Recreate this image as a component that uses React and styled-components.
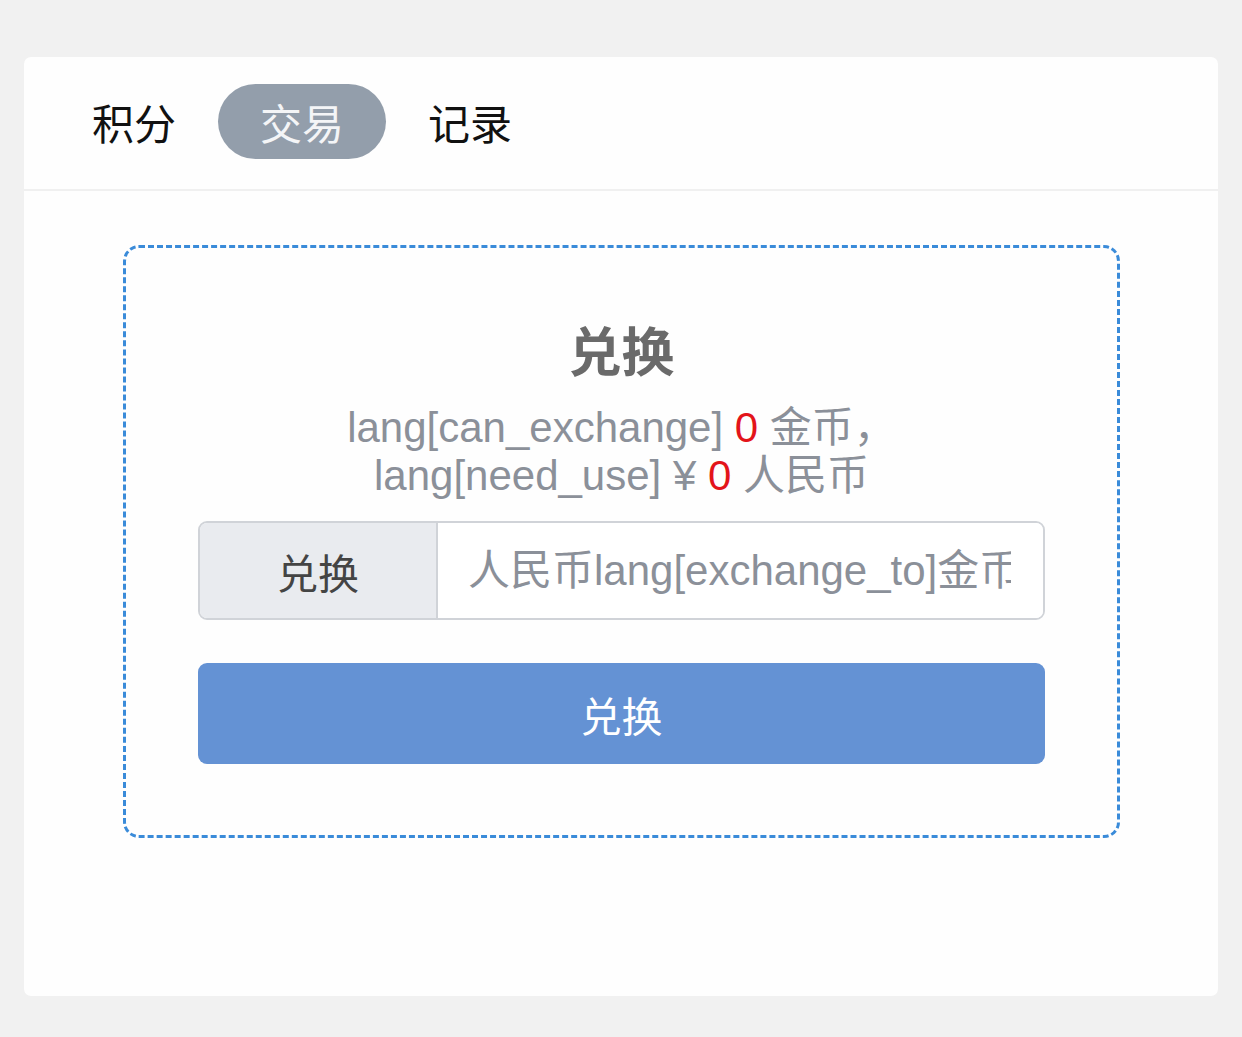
import React, { useState } from 'react'
import styled, { createGlobalStyle } from 'styled-components';

const GlobalStyle = createGlobalStyle`
    html, body {
        margin: 0;
        padding: 0;
        background: #f1f1f1;
        font-family: "Liberation Sans", "Noto Sans CJK SC", sans-serif;
    }
`;

const Page = styled.div`
    padding: 57px 24px 41px 24px;
`;

const Card = styled.div`
    background: #fefefe;
    border-radius: 7px;
    height: 939px;
    box-sizing: border-box;
`;

const TabBar = styled.div`
    display: flex;
    align-items: center;
    padding: 27px 26px 30px 26px;
    border-bottom: 2px solid #f0f0f0;
`;

const Tab = styled.div`
    height: 75px;
    line-height: 75px;
    padding: 0 42px;
    border-radius: 38px;
    font-family: "Noto Sans CJK SC", sans-serif;
    font-size: 42px;
    color: ${p => (p.active ? '#f4f5f7' : '#111')};
    background: ${p => (p.active ? '#939eab' : 'transparent')};
    cursor: pointer;
`;

const Body = styled.div`
    padding: 54px 98px 0 99px;
`;

const ExchangeBox = styled.div`
    border: 3px dashed #3a8bd9;
    border-radius: 16px;
    height: 593px;
    box-sizing: border-box;
    padding: 70px 72px 0 72px;
    display: flex;
    flex-direction: column;
    align-items: stretch;
`;

const Title = styled.h2`
    margin: 0;
    text-align: center;
    font-family: "Noto Sans CJK SC", sans-serif;
    font-size: 53px;
    line-height: 62px;
    font-weight: 700;
    color: #6a6a6a;
`;

const Info = styled.p`
    margin: 24px 0 21px 0;
    text-align: center;
    font-size: 42px;
    line-height: 48px;
    color: #8b9099;
`;

const Amount = styled.span`
    color: #e3141a;
`;

const InputGroup = styled.div`
    display: flex;
    height: 99px;
    border: 2px solid #d0d3d8;
    border-radius: 9px;
    overflow: hidden;
    box-sizing: border-box;
`;

const Addon = styled.div`
    width: 236px;
    flex-shrink: 0;
    display: flex;
    align-items: center;
    justify-content: center;
    background: #e9ebef;
    border-right: 2px solid #d0d3d8;
    font-family: "Noto Sans CJK SC", sans-serif;
    font-size: 41px;
    color: #444;
`;

const Field = styled.input`
    flex: 1;
    min-width: 0;
    border: none;
    outline: none;
    padding: 0 32px 0 30px;
    background: #fff;
    font-family: "Liberation Sans", "Noto Sans CJK SC", sans-serif;
    font-size: 42px;
    color: #333;
    &::placeholder {
        color: #8b9099;
    }
`;

const SubmitButton = styled.button`
    margin-top: 43px;
    height: 101px;
    border: none;
    border-radius: 9px;
    background: #6492d4;
    color: #fff;
    font-family: "Noto Sans CJK SC", sans-serif;
    font-size: 41px;
    cursor: pointer;
`;

const tabs = ['积分', '交易', '记录'];

const App = () => {
    const [active, setActive] = useState(1);
    const [amount, setAmount] = useState('');

    return (
        <Page>
            <GlobalStyle />
            <Card>
                <TabBar>
                    {tabs.map((t, i) => (
                        <Tab key={t} active={i === active ? 1 : 0} onClick={() => setActive(i)}>{t}</Tab>
                    ))}
                </TabBar>
                <Body>
                    <ExchangeBox>
                        <Title>兑换</Title>
                        <Info>
                            lang[can_exchange] <Amount>0</Amount> 金币，<br />
                            lang[need_use] ¥ <Amount>0</Amount> 人民币
                        </Info>
                        <InputGroup>
                            <Addon>兑换</Addon>
                            <Field
                                value={amount}
                                onChange={e => setAmount(e.target.value.replace(/\D/, ''))}
                                placeholder='人民币lang[exchange_to]金币数量'
                            />
                        </InputGroup>
                        <SubmitButton>兑换</SubmitButton>
                    </ExchangeBox>
                </Body>
            </Card>
        </Page>
    )
}

export default App;
